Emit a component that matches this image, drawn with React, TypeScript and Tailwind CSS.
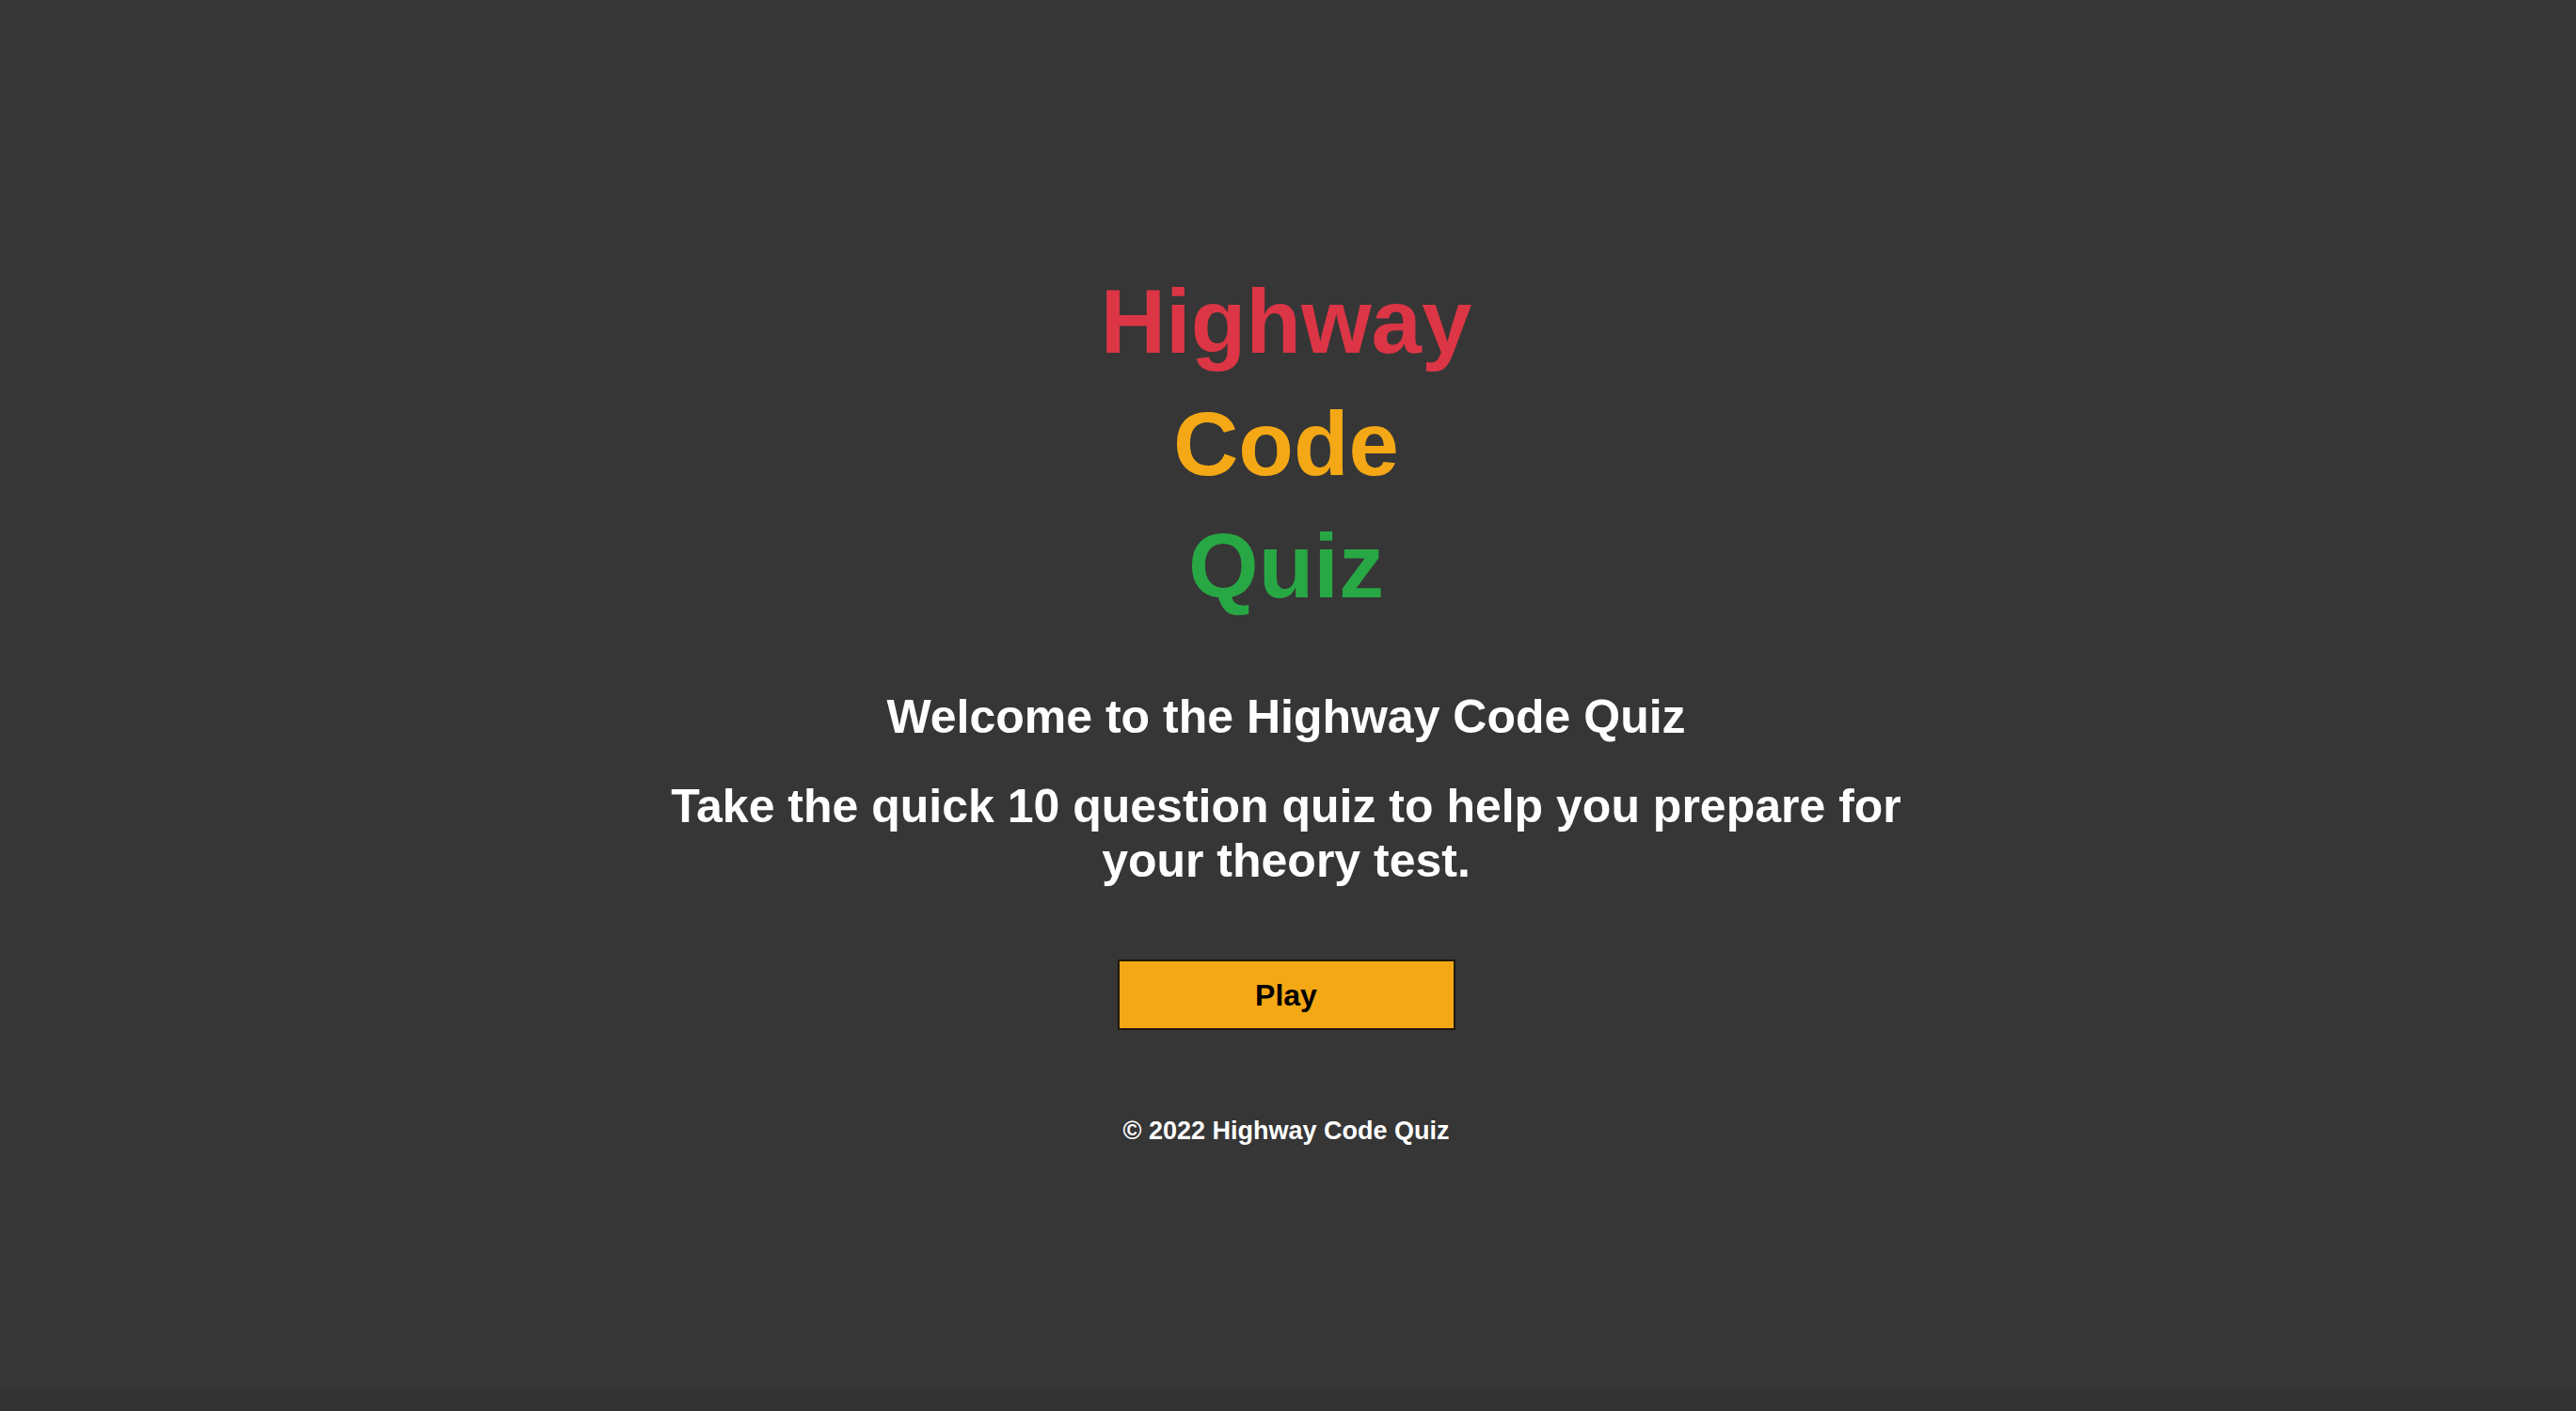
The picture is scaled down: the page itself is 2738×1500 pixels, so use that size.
import React from 'react';

const titleWords = [
  { word: 'Highway', color: 'text-[#dc3545]' },
  { word: 'Code', color: 'text-[#f4a815]' },
  { word: 'Quiz', color: 'text-[#28a745]' },
];

export default function App() {
  return (
    <div className="min-h-screen w-full bg-[#363636] flex flex-col font-['Liberation_Sans',Arial,sans-serif] font-bold">
      <main className="flex-1 flex flex-col items-center pt-[277px] pr-[4px] text-center">
        {/* Title */}
        <h1 className="flex flex-col items-center text-[96px] leading-[130px]">
          {titleWords.map((t) => (
            <span key={t.word} className={t.color}>
              {t.word}
            </span>
          ))}
        </h1>

        <p className="mt-[66px] text-white text-[50px] leading-[58px]">
          Welcome to the Highway Code Quiz
        </p>
        <p className="mt-[37px] max-w-[1360px] text-white text-[50px] leading-[58px]">
          Take the quick 10 question quiz to help you prepare for your theory test.
        </p>

        <button className="mt-[76px] w-[359px] h-[75px] flex items-center justify-center bg-[#f4a815] border-2 border-[#1f1808] text-black text-[32px]">
          Play
        </button>

        <footer className="mt-[91px] text-white text-[27px] leading-[32px]">
          © 2022 Highway Code Quiz
        </footer>
      </main>
      <div className="h-[25px] bg-[#333333]" />
    </div>
  );
}
